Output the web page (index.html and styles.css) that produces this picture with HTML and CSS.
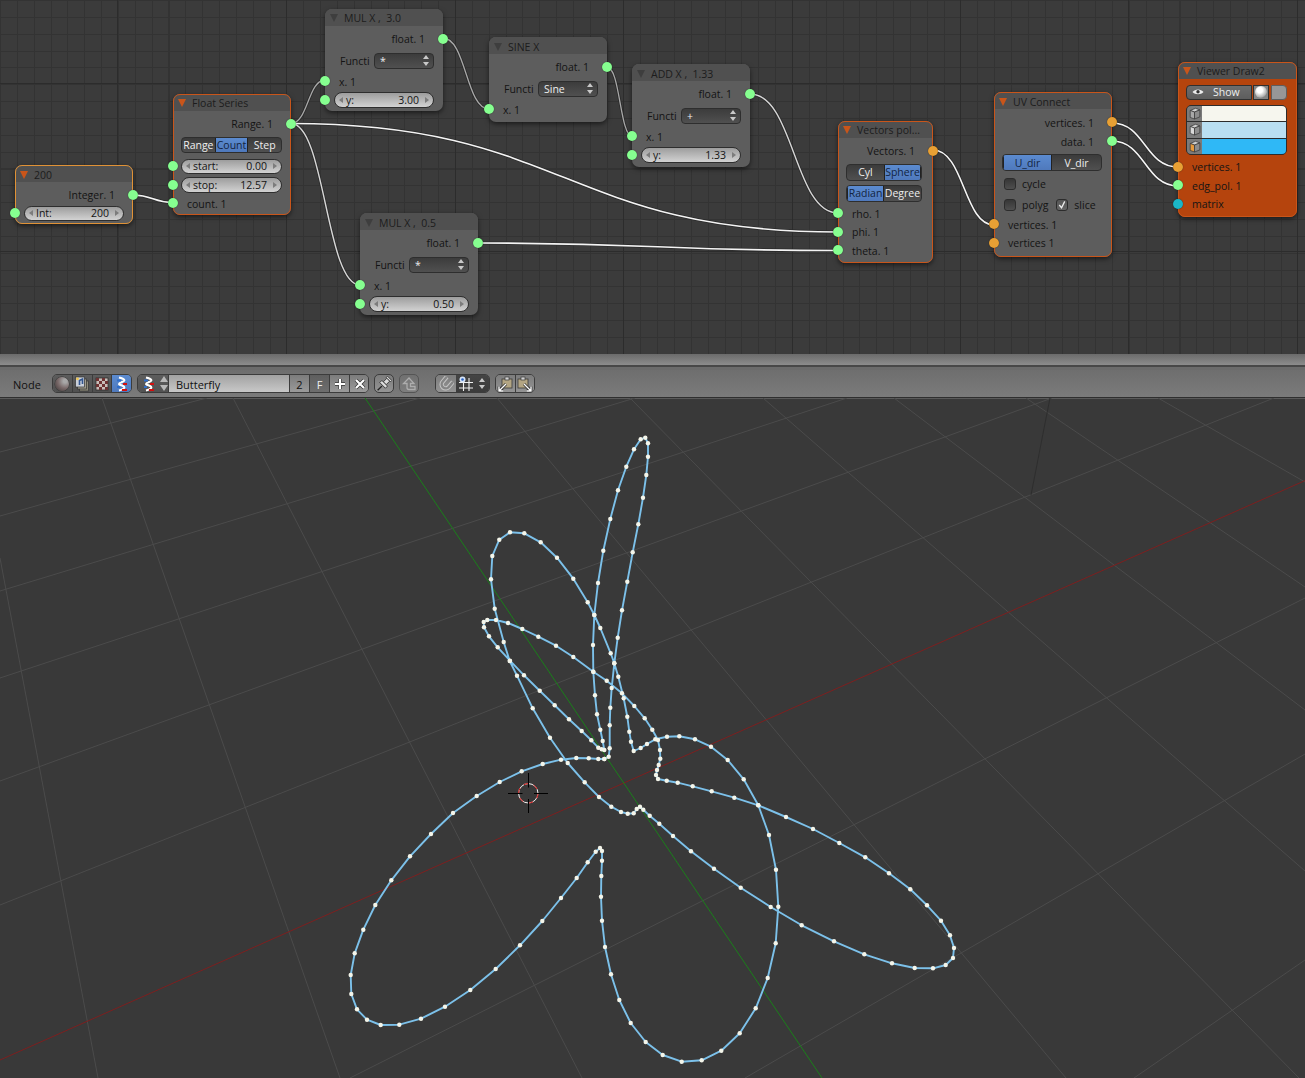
FILE: index.html
```html
<!DOCTYPE html>
<html lang="en">
<head>
<meta charset="utf-8">
<title>Node editor - Butterfly</title>
<link rel="stylesheet" href="styles.css">
</head>
<body>
<main class="app">
  <section class="node-editor">
    <svg class="wires" viewBox="0 0 1305 354" aria-hidden="true">
      <g class="wire-bg">
        <path d="M133 195C153 195 153 202.5 173 202.5"/>
        <path d="M291 123.5C308 123.5 308 80 325 80"/>
        <path d="M291 123.5C325 123.5 326 285 360 285"/>
        <path d="M291 123.5C565 123.5 565 232 838 232"/>
        <path d="M478 243C658 243 658 250.5 838 250.5"/>
        <path d="M443 38C466 38 466 109 489 109"/>
        <path d="M607 67C620 67 620 136 632 136"/>
        <path d="M750 94C794 94 794 213 838 213"/>
        <path d="M933 150C964 150 964 225 994 225"/>
        <path d="M1112 123C1145 123 1145 167 1178 167"/>
        <path d="M1112 141C1145 141 1145 186 1178 186"/>
      </g>
      <g class="wire-dim">
        <path d="M291 123.5C308 123.5 308 80 325 80"/>
        <path d="M443 38C466 38 466 109 489 109"/>
        <path d="M607 67C620 67 620 136 632 136"/>
      </g>
      <g class="wire-soft">
        <path d="M291 123.5C325 123.5 326 285 360 285"/>
        <path d="M750 94C794 94 794 213 838 213"/>
      </g>
      <g class="wire-hot">
        <path d="M133 195C153 195 153 202.5 173 202.5"/>
        <path d="M291 123.5C565 123.5 565 232 838 232"/>
        <path d="M478 243C658 243 658 250.5 838 250.5"/>
        <path d="M933 150C964 150 964 225 994 225"/>
        <path d="M1112 123C1145 123 1145 167 1178 167"/>
        <path d="M1112 141C1145 141 1145 186 1178 186"/>
      </g>
    </svg>

    <article class="node n-int sel-light">
      <header class="node-title"><i class="tri"></i><span>200</span></header>
      <div class="row out"><span>Integer. 1</span><i class="sock green"></i></div>
      <div class="row ctl"><i class="sock green"></i><div class="num"><i class="al"></i><span>Int:</span><b>200</b><i class="ar"></i></div></div>
    </article>

    <article class="node n-float sel">
      <header class="node-title"><i class="tri"></i><span>Float Series</span></header>
      <div class="row out"><span>Range. 1</span><i class="sock green"></i></div>
      <div class="row tall ctl"><div class="seg"><span class="s-range">Range</span><span class="on s-count">Count</span><span class="s-step">Step</span></div></div>
      <div class="row ctl"><i class="sock green"></i><div class="num"><i class="al"></i><span>start:</span><b>0.00</b><i class="ar"></i></div></div>
      <div class="row ctl"><i class="sock green"></i><div class="num"><i class="al"></i><span>stop:</span><b>12.57</b><i class="ar"></i></div></div>
      <div class="row in"><i class="sock green"></i><span>count. 1</span></div>
    </article>

    <article class="node n-mul3">
      <header class="node-title"><i class="tri"></i><span>MUL X ,&nbsp; 3.0</span></header>
      <div class="row out"><span>float. 1</span><i class="sock green"></i></div>
      <div class="row tall func"><span>Functi</span><div class="drop"><span>*</span><i class="ud"></i></div></div>
      <div class="row in"><i class="sock green"></i><span>x. 1</span></div>
      <div class="row ctl"><i class="sock green"></i><div class="num"><i class="al"></i><span>y:</span><b>3.00</b><i class="ar"></i></div></div>
    </article>

    <article class="node n-mul5">
      <header class="node-title"><i class="tri"></i><span>MUL X ,&nbsp; 0.5</span></header>
      <div class="row out"><span>float. 1</span><i class="sock green"></i></div>
      <div class="row tall func"><span>Functi</span><div class="drop"><span>*</span><i class="ud"></i></div></div>
      <div class="row in"><i class="sock green"></i><span>x. 1</span></div>
      <div class="row ctl"><i class="sock green"></i><div class="num"><i class="al"></i><span>y:</span><b>0.50</b><i class="ar"></i></div></div>
    </article>

    <article class="node n-sine">
      <header class="node-title"><i class="tri"></i><span>SINE X</span></header>
      <div class="row out"><span>float. 1</span><i class="sock green"></i></div>
      <div class="row tall func"><span>Functi</span><div class="drop"><span>Sine</span><i class="ud"></i></div></div>
      <div class="row in"><i class="sock green"></i><span>x. 1</span></div>
    </article>

    <article class="node n-add">
      <header class="node-title"><i class="tri"></i><span>ADD X ,&nbsp; 1.33</span></header>
      <div class="row out"><span>float. 1</span><i class="sock green"></i></div>
      <div class="row tall func"><span>Functi</span><div class="drop"><span>+</span><i class="ud"></i></div></div>
      <div class="row in"><i class="sock green"></i><span>x. 1</span></div>
      <div class="row ctl"><i class="sock green"></i><div class="num"><i class="al"></i><span>y:</span><b>1.33</b><i class="ar"></i></div></div>
    </article>

    <article class="node n-vec sel">
      <header class="node-title"><i class="tri"></i><span>Vectors pol...</span></header>
      <div class="row out"><span>Vectors. 1</span><i class="sock orange"></i></div>
      <div class="row tall ctl"><div class="seg seg-tall"><span class="half">Cyl</span><span class="half on">Sphere</span></div></div>
      <div class="row ctl"><div class="seg seg-tall"><span class="half on">Radian</span><span class="half">Degree</span></div></div>
      <div class="row in first-in"><i class="sock green"></i><span>rho. 1</span></div>
      <div class="row in"><i class="sock green"></i><span>phi. 1</span></div>
      <div class="row in"><i class="sock green"></i><span>theta. 1</span></div>
    </article>

    <article class="node n-uv sel">
      <header class="node-title"><i class="tri"></i><span>UV Connect</span></header>
      <div class="row out"><span>vertices. 1</span><i class="sock orange"></i></div>
      <div class="row out"><span>data. 1</span><i class="sock green"></i></div>
      <div class="row tall ctl"><div class="seg seg-tall"><span class="half on">U_dir</span><span class="half">V_dir</span></div></div>
      <div class="row checks"><label class="chk"><i class="box"></i>cycle</label></div>
      <div class="row tall checks polyg"><label class="chk"><i class="box"></i>polyg</label><label class="chk"><i class="box tick"><svg viewBox="0 0 11 11"><path d="M2.5 5.5l2.5 3 3.5-7"/></svg></i>slice</label></div>
      <div class="row in"><i class="sock orange"></i><span>vertices. 1</span></div>
      <div class="row in"><i class="sock orange"></i><span>vertices 1</span></div>
    </article>

    <article class="node n-view sel">
      <header class="node-title"><i class="tri"></i><span>Viewer Draw2</span></header>
      <div class="view-btns">
        <div class="show"><svg class="eye" viewBox="0 0 12 8"><path d="M0.5 4C3 0.5 9 0.5 11.5 4C9 7 3 7 0.5 4Z"/><circle cx="6" cy="3.8" r="1.7"/></svg><span>Show</span></div>
        <div class="ball"><i></i></div>
        <div class="plain"></div>
      </div>
      <div class="swatches">
        <div class="sw sw-a"><svg class="cube" viewBox="0 0 14 14"><path class="c-top" d="M3 4L8 2L12 3.500L7 5.500Z"/><path class="c-front" d="M3 4L7 5.500V12L3 10.500Z"/><path class="c-side" d="M7 5.500L12 3.500V10L7 12Z"/></svg><i></i></div>
        <div class="sw sw-b"><svg class="cube" viewBox="0 0 14 14"><path class="c-top" d="M3 4L8 2L12 3.500L7 5.500Z"/><path class="c-front hot-b" d="M3 4L7 5.500V12L3 10.500Z"/><path class="c-side" d="M7 5.500L12 3.500V10L7 12Z"/></svg><i></i></div>
        <div class="sw sw-c"><svg class="cube" viewBox="0 0 14 14"><path class="c-top" d="M3 4L8 2L12 3.500L7 5.500Z"/><path class="c-front hot-c" d="M3 4L7 5.500V12L3 10.500Z"/><path class="c-side" d="M7 5.500L12 3.500V10L7 12Z"/></svg><i></i></div>
      </div>
      <div class="row in"><i class="sock orange"></i><span>vertices. 1</span></div>
      <div class="row in"><i class="sock green"></i><span>edg_pol. 1</span></div>
      <div class="row in"><i class="sock teal"></i><span>matrix</span></div>
    </article>
  </section>

  <div class="splitter"></div>
  <div class="split-line"></div>

  <nav class="header">
    <span class="menu-label">Node</span>

    <div class="group modes">
      <button class="ib"><i class="sphere-ic"></i></button>
      <button class="ib"><svg viewBox="0 0 16 16"><rect class="pic-back" x="5.500" y="5" width="9" height="10"/><rect class="pic-mid" x="3.500" y="3" width="9" height="10"/><rect class="pic-front" x="1.500" y="1" width="9" height="10"/><circle class="pic-sun" cx="3.500" cy="2.800" r="1.400"/><path class="pic-note" d="M5.500 9V4.500l3-1.500v5"/></svg></button>
      <button class="ib"><svg viewBox="0 0 16 16"><rect class="chk-base" x="2" y="2" width="12" height="12"/><path class="chk-red" d="M2 2h3v3H2zM8 2h3v3H8zM5 5h3v3H5zM11 5h3v3h-3zM2 8h3v3H2zM8 8h3v3H8zM5 11h3v3H5zM11 11h3v3h-3z"/></svg></button>
      <button class="ib active"><svg viewBox="0 0 16 16"><path class="nd-w" d="M5 1.500C11 3 12 4.500 8 6C4 7.500 4 8.500 8 9.500C12 11 11 13 5 14.500"/><path class="nd-b" d="M3 4.500h4M3 11h3"/><path class="nd-r" d="M9 8h4M8 14h5"/></svg></button>
    </div>

    <div class="databar">
      <button class="db-pick"><svg viewBox="0 0 16 16"><path class="nd-w" d="M5 1.500C11 3 12 4.500 8 6C4 7.500 4 8.500 8 9.500C12 11 11 13 5 14.500"/><path class="nd-b" d="M3 4.500h4M3 11h3"/><path class="nd-r" d="M9 8h4M8 14h5"/></svg><i class="ud ud-light"></i></button>
      <div class="db-name">Butterfly</div>
      <button class="db-btn">2</button>
      <button class="db-btn db-f">F</button>
      <button class="db-btn"><svg viewBox="0 0 14 14"><path class="cross" d="M7 2V12M2 7H12"/><path class="cross-in" d="M7 2V12M2 7H12"/></svg></button>
      <button class="db-btn db-end"><svg viewBox="0 0 14 14"><path class="cross" d="M3 3L11 11M11 3L3 11"/><path class="cross-in" d="M3 3L11 11M11 3L3 11"/></svg></button>
    </div>

    <button class="solo pin"><svg viewBox="0 0 16 16"><g class="pin-g" transform="rotate(45 8 8)"><path d="M8 11V17"/><rect x="5" y="0" width="6" height="2"/><rect x="6" y="2" width="4" height="5"/><rect x="4" y="7" width="8" height="3"/></g></svg></button>
    <button class="solo parent"><svg viewBox="0 0 16 16"><path d="M8 2L2.500 7.500H6V11.500Q6 13.500 8 13.500H14V10.500H9.500V7.500H13Z"/></svg></button>

    <div class="snap-group">
      <button class="snap-mag"><svg viewBox="0 0 16 16"><g transform="rotate(40 8 8)"><path class="mag-o" d="M4 2V8.500A4 4 0 0 0 12 8.500V2"/><path class="mag-i" d="M4 2V8.500A4 4 0 0 0 12 8.500V2"/></g></svg></button>
      <button class="snap-drop"><svg viewBox="0 0 16 16"><path class="grid-ic" d="M5.500 4V15M11 2V15M1 6.500H15M1 12H15"/><circle class="dot-o" cx="4.500" cy="3.500" r="3"/><circle class="dot-i" cx="4.500" cy="3.500" r="1.300"/></svg><i class="ud"></i></button>
    </div>

    <div class="group clip">
      <button class="ib-clip"><svg viewBox="0 0 16 16"><rect class="board" x="5" y="3" width="10" height="9"/><rect class="clipper" x="8" y="1" width="4" height="3"/><path class="arrow-o" d="M9 8L2 15M2 10.500V15H6.500"/><path class="arrow-i" d="M9 8L2 15M2 10.500V15H6.500"/></svg></button>
      <button class="ib-clip"><svg viewBox="0 0 16 16"><rect class="board" x="1" y="3" width="10" height="9"/><rect class="clipper" x="4" y="1" width="4" height="3"/><path class="arrow-o" d="M7 8L14 15M14 10.500V15H9.500"/><path class="arrow-i" d="M7 8L14 15M14 10.500V15H9.500"/></svg></button>
    </div>
  </nav>

  <section class="view3d">
    <svg class="scene" viewBox="0 398 1305 680" aria-hidden="true">
      <defs>
        <marker id="vert" markerUnits="userSpaceOnUse" markerWidth="6" markerHeight="6" refX="3" refY="3"><circle class="vert-dot" cx="3" cy="3" r="2.200"/></marker>
      </defs>
      <path class="grid3d" d="M0 452L207 398M0 516L420 398M0 591L635 398M0 678L847 398M0 781L1052 398M0 905L1274 398M350 1078L1305 598M745 1078L1305 754M1134 1078L1305 960M0 558L98 1078M102 398L340 1078M233 398L582 1078M497 398L1066 1078M630 398L1299 1078M763 398L1305 871M894 398L1305 710M1026 398L1305 587M1158 398L1305 482"/>
      <path class="cam-line" d="M1050 398L1031 495"/>
      <path class="axis-x" d="M0 1060L1305 480.600"/>
      <path class="axis-y" d="M365 398L822 1078"/>
      <polyline class="curve" points="604.3,759 608.7,756.7 609.7,748.3 609.7,725.3 610.3,707.7 611.7,688 614.3,663.3 617.7,637.7 622,610.3 627.3,581.7 632.7,552.3 638.3,524.3 643,497.7 646.3,475 648,456.7 648,443.3 645.3,437.7 640.7,439.3 634,449.3 626.3,466.7 618,490.3 610.3,519 603.3,550.7 598,583 594.3,615 593,645 593.3,671.7 595,695.3 597,714.3 600.3,729.7 602.7,741 604.3,750 601.7,749.3 598.3,747.7 591.3,740.3 581.7,731 569,719.3 554.7,705.3 539.7,690.7 524,675.3 510,660.7 497.7,647.3 489,636.3 484,627.3 483.7,622 487.3,620 496,620 508,623 522.3,629 538.3,636.7 556,645.7 573.3,657 593.3,671.7 606.7,680.7 622,693.3 634.3,706 644.7,718.3 652.3,729.7 658,740 660,750 660.3,758.7 658.7,765 657,770 656,775 658,779 666.7,780.7 677.7,782.7 692.7,786.3 711.7,791.3 734.3,797.7 758.3,805.3 786,817 813,829 839.3,843 865.3,857.3 889,873.3 910.3,889.3 927,905.3 941,920.7 950,935.3 954,948 953,958 945.7,965 933,968.3 914.7,968 892,963.3 864.3,954.3 834,941.3 801.7,925.3 770.7,907 740.7,887.7 714,868.7 691,851.3 673,836 659.3,823.7 649.7,815.7 643.3,809.7 640,806.7 636.7,809 633.7,813.3 627.7,813.7 621,812 611.3,806.7 599,797 584.7,782.3 567.7,763 550,737.7 532.7,708.3 517,675.7 509.7,661 503.7,642 494.7,608.7 491,579.3 492.3,556 499.3,539.7 510,532.3 524.3,533.3 540.7,542.3 557,557.7 573.3,578.7 587.7,602.3 594.3,615 600.3,628 610.7,653.3 614.3,663.3 618.3,676.7 623.7,698.3 627.3,716.7 629.3,731.7 631,741.7 633.7,751 640.7,748 647,744 655.3,739.3 667,736.7 679.3,736.3 695,739.3 711,746.7 727.7,760 743.7,779.3 758.3,805.3 769,835 776,869.7 778.3,906.7 775.7,943.3 767.7,978 755.7,1008.3 739.7,1033.3 721.3,1050.7 701.7,1060.3 681.7,1061.7 662.7,1055 645.7,1042 630.7,1023 619.3,1000 611,974.3 605,947 602,920.700 601,896.7 601.3,876 602,860.7 602,851 600,848 595.7,851.7 587.7,862.3 576.7,878 561,898 542.3,921 520,945.3 495.7,969 470.3,990 445,1006.7 421,1018.7 399.3,1024.7 380.7,1025 367,1019.7 357,1009.3 351.3,994 350.7,975 354.7,953.3 363.3,929.7 375.3,905 391.3,880.3 410,856.3 431,834 453,813 476.7,796 499.7,782 521.700,771.3 542.7,764 561,759.7 576.3,758 588.7,758.3 598.3,759 604.3,759"/>
      <circle class="cur-w" cx="528.3" cy="793.3" r="9.700"/>
      <circle class="cur-r" cx="528.3" cy="793.3" r="9.700"/>
      <path class="cur-x" d="M508 793.500H522.500M534 793.500H548M528.500 773V787.500M528.500 799V813"/>
    </svg>
  </section>
</main>
</body>
</html>
```
FILE: styles.css
```css
* { box-sizing: border-box; }
html, body { margin: 0; padding: 0; }
body { width: 1305px; height: 1078px; overflow: hidden; background: #393939; font-family: "Open Sans", "Noto Sans", "Liberation Sans", sans-serif; font-size: 10.5px; color: #141414; }
.app { display: flex; flex-direction: column; height: 1078px; }
button { font: inherit; color: inherit; margin: 0; padding: 0; border: 0; background: none; }
svg { display: block; }

/* Node editor */
.node-editor {
  position: relative; height: 354px; flex: none; overflow: hidden; background-color: #3b3b3b;
  background-image:
    repeating-linear-gradient(to right, transparent 0 117.5px, #2c2c2c 117.5px 118.5px, transparent 118.5px 168.5px),
    repeating-linear-gradient(to bottom, transparent 0 83px, #2c2c2c 83px 84px, transparent 84px 168.5px),
    repeating-linear-gradient(to right, #333 0 1px, transparent 1px 16.85px),
    repeating-linear-gradient(to bottom, #333 0 1px, transparent 1px 16.85px);
  background-position: 0 0;
}
.wires { position: absolute; inset: 0; width: 1305px; height: 354px; }
.wires path { fill: none; }
.wire-bg path { stroke: #2a2a2a; stroke-width: 3; }
.wire-dim path { stroke: #a8a8a8; stroke-width: 1.3; }
.wire-soft path { stroke: #d6d6d6; stroke-width: 1.4; }
.wire-hot path { stroke: #f4f4f4; stroke-width: 1.6; }

.node { position: absolute; width: 118px; border-radius: 7px; background: #5d5d5d; box-shadow: 0 2px 5px rgba(0,0,0,.55); }
.sel { outline: 1.5px solid #c9551a; outline-offset: -1px; }
.sel-light { outline: 1.5px solid #e09236; outline-offset: -1px; }
.node-title { height: 17px; display: flex; align-items: center; gap: 6px; padding: 1px 0 0 5px; background: #505050; border-radius: 7px 7px 0 0; color: #1c1c1c; margin-bottom: 3.5px; white-space: nowrap; }
.n-int .node-title, .n-mul5 .node-title, .n-sine .node-title, .n-add .node-title, .n-uv .node-title { padding-top: 3px; }
.tri { width: 0; height: 0; border-left: 4px solid transparent; border-right: 4px solid transparent; border-top: 8px solid #3e3e3e; }
.sel .tri, .sel-light .tri { border-top-color: #c9551a; }

.n-int { left: 15px; top: 165px; height: 59px; }
.n-float { left: 173px; top: 94px; height: 121px; }
.n-mul3 { left: 325px; top: 9px; height: 102px; }
.n-mul5 { left: 360px; top: 213px; height: 102px; }
.n-sine { left: 489px; top: 37px; height: 85px; }
.n-add { left: 632px; top: 64px; height: 103px; }
.n-vec { left: 838px; top: 121px; height: 142px; width: 95px; }
.n-uv { left: 994px; top: 92px; height: 165px; }
.n-view { left: 1178px; top: 62px; height: 155px; width: 119px; background: #b5440d; }

.row { position: relative; height: 18.5px; display: flex; align-items: center; white-space: nowrap; }
.row.tall { height: 24px; }
.out { justify-content: flex-end; padding: 1px 18px 0 0; }
.in { padding: 1px 0 0 14px; }
.ctl { padding: 0 9px; }
.first-in { margin-top: 1.5px; }
.n-uv .out { height: 19px; }
.sock { position: absolute; top: 50%; margin-top: -5px; width: 10px; height: 10px; border-radius: 50%; box-shadow: 0 0 1px rgba(20,20,20,.9); }
.out .sock { right: -5px; }
.in .sock, .ctl .sock { left: -5px; }
.green { background: #86ff90; }
.orange { background: #e8a034; }
.teal { background: #1bb6c6; }

.num { flex: 1; height: 15.5px; display: flex; align-items: center; padding: 0 4px; border-radius: 8px; border: 1px solid #2e2e2e; background: linear-gradient(#9d9d9d, #d2d2d2); color: #141414; }
.num span { margin-left: 3px; }
.num b { font-weight: 400; margin-left: auto; margin-right: 6px; }
.al, .ar { width: 0; height: 0; border-top: 3.5px solid transparent; border-bottom: 3.5px solid transparent; }
.al { border-right: 4px solid #7c7c7c; }
.ar { border-left: 4px solid #7c7c7c; }

.seg { flex: 1; height: 16px; display: flex; border-radius: 4px; border: 1px solid #2e2e2e; overflow: hidden; background: linear-gradient(#3b3b3b, #505050); color: #eee; }
.seg span { display: flex; align-items: center; justify-content: center; }
.seg .on { background: linear-gradient(#5b8bd0, #4f79bc); color: #13243f; box-shadow: inset 1px 0 0 #222, inset -1px 0 0 #222; }
.seg-tall { height: 17px; }
.half { flex: 1; }
.s-range { flex: 33; }
.s-count { flex: 34; }
.s-step { flex: 33; }
.n-vec .ctl { padding-right: 11px; padding-left: 8px; }
.n-float .ctl { padding-left: 8px; }
.n-uv .ctl { padding: 0 10px 0 8px; }

.func { padding: 1px 9px 0 15px; justify-content: space-between; }
.drop { width: 60px; height: 16px; display: flex; align-items: center; padding: 0 4px 0 5px; border-radius: 4px; border: 1px solid #2e2e2e; background: linear-gradient(#3c3c3c, #505050); color: #eee; }
.ud { position: relative; display: block; margin-left: auto; width: 6px; height: 11px; }
.ud::before, .ud::after { content: ""; position: absolute; left: 0; border-left: 3px solid transparent; border-right: 3px solid transparent; }
.ud::before { top: 0; border-bottom: 4px solid #c9c9c9; }
.ud::after { bottom: 0; border-top: 4px solid #c9c9c9; }
.ud-light { width: 8px; height: 15px; margin: 0 0 0 3px; }
.ud-light::before { border-left-width: 4px; border-right-width: 4px; border-bottom: 6px solid #b8b8b8; }
.ud-light::after { border-left-width: 4px; border-right-width: 4px; border-top: 6px solid #b8b8b8; }

.checks { padding: 1px 0 0 10px; gap: 8px; }
.row.polyg { height: 22px; }
.chk { display: flex; align-items: center; gap: 6px; }
.box { display: block; width: 12px; height: 12px; border-radius: 3px; background: linear-gradient(#363636, #4f4f4f); border: 1px solid #2c2c2c; }
.tick { background: linear-gradient(#555, #666); }
.tick svg { width: 10px; height: 10px; }
.tick path { fill: none; stroke: #eee; stroke-width: 1.4; }

.view-btns { display: flex; margin: 5.5px 10px 0 8px; height: 15.5px; gap: 1px; }
.show { width: 66px; display: flex; align-items: center; padding-left: 5px; border-radius: 4px 0 0 4px; border: 1px solid #303030; background: linear-gradient(#6d6d6d, #5d5d5d); color: #eee; }
.show span { margin-left: 9px; }
.eye { width: 12px; height: 8px; }
.eye path { fill: #ececec; }
.eye circle { fill: #333; }
.ball { width: 16px; display: flex; align-items: center; justify-content: center; border: 1px solid #303030; background: #858585; }
.ball i { width: 12px; height: 12px; border-radius: 50%; background: radial-gradient(circle at 40% 35%, #fff 0 25%, #b0b0b0 65%, #2b2b2b 100%); }
.plain { width: 16px; margin-left: 1px; border-radius: 0 4px 4px 0; border: 1px solid #5e5e5e; background: #979797; }
.swatches { margin: 5px 10px 2.5px 8px; height: 50px; border: 1px solid #2c2c2c; border-radius: 5px; overflow: hidden; display: flex; flex-direction: column; background: #2c2c2c; gap: 1px; }
.sw { flex: 1; display: flex; }
.sw .cube { width: 15px; flex: none; height: 100%; background: #7b7b7b; }
.sw i { flex: 1; }
.sw-a i { background: #f6f6ee; }
.sw-b i { background: #b9dff2; }
.sw-c i { background: #2fb8f6; }
.cube path { stroke: #3a3a3a; stroke-width: .7; stroke-linejoin: round; }
.c-top { fill: #d0d0d0; }
.c-front { fill: #a8a8a8; }
.c-side { fill: #8c8c8c; }
.hot-b { fill: #d9d9d9; }
.hot-c { fill: #e89a3c; }

/* Strips */
.splitter { height: 11px; flex: none; background: linear-gradient(#6b6b6b, #8c8c8c); }
.split-line { height: 5px; flex: none; background: linear-gradient(#474747 0 2px, #6b6b6b 2px); }
.header { height: 28px; flex: none; display: flex; align-items: center; padding: 0 0 0 13px; background: linear-gradient(#6e6e6e, #7b7b7b); border-bottom: 1px solid #2f2f2f; }
.menu-label { width: 39px; padding-top: 1px; color: #111; font-size: 11px; }

.group { display: flex; border: 1px solid #3c3c3c; border-radius: 5px; overflow: hidden; height: 19px; }
.modes { width: 80px; margin-right: 5px; }
.ib { flex: 1; display: flex; align-items: center; justify-content: center; background: linear-gradient(#5c5c5c, #505050); border-right: 1px solid #3c3c3c; }
.ib:last-child { border-right: 0; }
.ib svg { width: 16px; height: 16px; }
.ib.active { background: linear-gradient(#5b8bd0, #4f79bc); }
.sphere-ic { width: 14px; height: 14px; border-radius: 50%; background: radial-gradient(circle at 72% 30%, #a8a8a8 0 12%, #7a6a6a 50%, #3a3434 100%); box-shadow: 0 0 0 .5px #333; }
.pic-back { fill: #8e8a7a; stroke: #333; stroke-width: .7; }
.pic-mid { fill: #a09c8c; stroke: #333; stroke-width: .7; }
.pic-front { fill: #c9cfd9; stroke: #333; stroke-width: .7; }
.pic-sun { fill: #f1c64e; }
.pic-note { fill: none; stroke: #33568f; stroke-width: 1.600; }
.chk-base { fill: #c9bdb8; stroke: #2e2e2e; stroke-width: .8; }
.chk-red { fill: #6e3232; }
.nd-w { fill: none; stroke: #fff; stroke-width: 2; }
.nd-b { fill: none; stroke: #2f6ecb; stroke-width: 1.800; }
.nd-r { fill: none; stroke: #d30f0f; stroke-width: 2; }

.databar { display: flex; height: 19px; width: 232px; margin-right: 5px; border: 1px solid #3c3c3c; border-radius: 5px; overflow: hidden; }
.db-pick { width: 31px; flex: none; display: flex; align-items: center; padding-left: 3px; background: linear-gradient(#5d5d5d, #525252); border-right: 1px solid #3c3c3c; }
.db-pick svg { width: 16px; height: 16px; }
.db-name { width: 120px; flex: none; display: flex; align-items: center; padding: 1px 0 0 7px; background: linear-gradient(#a2a2a2, #c8c8c8); color: #111; font-size: 11px; }
.db-btn { width: 20px; flex: none; display: flex; align-items: center; justify-content: center; padding-top: 1px; background: linear-gradient(#7c7c7c, #9a9a9a); border-left: 1px solid #3c3c3c; color: #111; font-size: 11px; }
.db-btn svg { width: 14px; height: 14px; }
.db-f { background: linear-gradient(#5e5e5e, #6e6e6e); color: #eee; }
.cross { fill: none; stroke: #333; stroke-width: 3.600; }
.cross-in { fill: none; stroke: #fff; stroke-width: 2.200; }

.solo { width: 20px; height: 19px; display: flex; align-items: center; justify-content: center; border: 1px solid #3c3c3c; border-radius: 5px; background: linear-gradient(#7c7c7c, #949494); }
.solo svg { width: 16px; height: 16px; }
.pin { margin-right: 5px; }
.parent { margin-right: 16px; background: linear-gradient(#707070, #7e7e7e); border-color: #555; }
.pin-g path { fill: none; stroke: #222; stroke-width: 1.400; }
.pin-g rect { fill: #dcdcdc; stroke: #2a2a2a; stroke-width: .8; }
.parent path { fill: #7a7a7a; stroke: #adadad; stroke-width: 1.300; }

.snap-group { display: flex; width: 55px; height: 19px; margin-right: 5px; border: 1px solid #3c3c3c; border-radius: 5px; overflow: hidden; }
.snap-mag { width: 20px; flex: none; display: flex; align-items: center; justify-content: center; background: linear-gradient(#7c7c7c, #949494); }
.snap-mag svg { width: 16px; height: 16px; }
.mag-o { fill: none; stroke: #c4c4c4; stroke-width: 4.400; }
.mag-i { fill: none; stroke: #858585; stroke-width: 2.400; }
.snap-drop { flex: 1; display: flex; align-items: center; padding: 0 4px 0 2px; background: linear-gradient(#444, #3b3b3b); }
.snap-drop svg { width: 16px; height: 16px; }
.grid-ic { fill: none; stroke: #f0f0f0; stroke-width: 1.100; }
.dot-o { fill: #d6e4f7; }
.dot-i { fill: #2a62c4; }

.clip { width: 40px; }
.ib-clip { flex: 1; display: flex; align-items: center; justify-content: center; background: linear-gradient(#7c7c7c, #949494); border-right: 1px solid #3c3c3c; }
.ib-clip:last-child { border-right: 0; }
.ib-clip svg { width: 16px; height: 16px; }
.board { fill: #b3a583; stroke: #3a3a3a; stroke-width: .8; }
.clipper { fill: #d2d2d2; stroke: #3a3a3a; stroke-width: .7; }
.arrow-o { fill: none; stroke: #2a2a2a; stroke-width: 2.800; }
.arrow-i { fill: none; stroke: #fff; stroke-width: 1.400; }

/* 3D viewport */
.view3d { flex: 1; min-height: 0; border-top: 1px solid #5a5a5a; background: #393939; }
.scene { width: 1305px; height: 680px; margin-top: -1px; }
.grid3d { fill: none; stroke: #4b4b4b; stroke-width: 1; }
.cam-line { fill: none; stroke: #2e2e2e; stroke-width: 1; }
.axis-x { fill: none; stroke: #7d1f1f; stroke-width: 1; }
.axis-y { fill: none; stroke: #1a7f1a; stroke-width: 1; }
.curve { fill: none; stroke: #7cc1ea; stroke-width: 1.900; stroke-linejoin: round; marker-start: url(#vert); marker-mid: url(#vert); marker-end: url(#vert); }
.vert-dot { fill: #f4f5ea; }
.cur-w { fill: none; stroke: #f4f4f4; stroke-width: 1; }
.cur-r { fill: none; stroke: #d41010; stroke-width: 1; stroke-dasharray: 5.100 5.100; }
.cur-x { fill: none; stroke: #000; stroke-width: 1; }
```
